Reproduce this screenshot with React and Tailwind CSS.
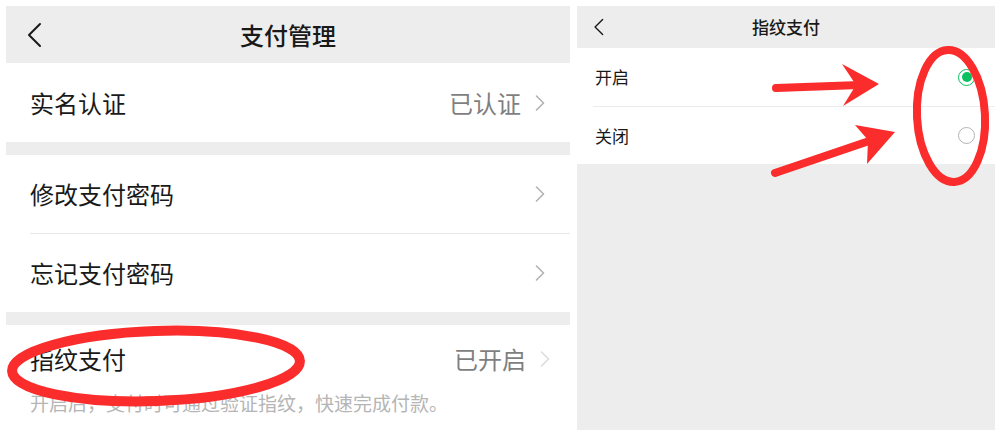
import React from 'react';

const BackArrow = ({ className }) => (
  <svg viewBox="0 0 16 26" className={className} fill="none" stroke="#1a1a1a" strokeWidth="2" strokeLinecap="round" strokeLinejoin="round">
    <path d="M14 2 L3 13 L14 24" />
  </svg>
);

const Chevron = ({ color = '#b2b2b2' }) => (
  <svg viewBox="0 0 10 16" className="w-[10px] h-[16px]" fill="none" stroke={color} strokeWidth="1.6" strokeLinecap="round" strokeLinejoin="round">
    <path d="M1.5 1 L8.5 8 L1.5 15" />
  </svg>
);

function Row({ label, value, chevronColor, className = 'pr-[25px]' }) {
  return (
    <div className={`flex items-center justify-between pl-[24px] ${className}`}>
      <span className="text-[24px] text-[#191919]">{label}</span>
      <div className="flex items-center gap-[14px]">
        {value && <span className="text-[24px] text-[#7f7f7f]">{value}</span>}
        <Chevron color={chevronColor} />
      </div>
    </div>
  );
}

function PayManage() {
  return (
    <div className="w-[564px] flex flex-col bg-white">
      <div className="h-[57px] shrink-0 bg-[#ededed] grid grid-cols-[80px_1fr_80px] items-center">
        <BackArrow className="w-[16px] h-[26px] ml-[20px]" />
        <h1 className="text-center text-[24px] font-medium text-[#191919]">支付管理</h1>
        <div />
      </div>
      <Row label="实名认证" value="已认证" className="h-[79px] pr-[25px]" />
      <div className="h-[13px] bg-[#ededed]" />
      <Row label="修改支付密码" className="h-[78px] pr-[25px]" />
      <div className="ml-[24px] h-px bg-[#e8e8e8]" />
      <Row label="忘记支付密码" className="h-[78px] pr-[25px]" />
      <div className="h-[13px] bg-[#ededed]" />
      <Row label="指纹支付" value="已开启" chevronColor="#dcdcdc" className="h-[68px] pr-[20px]" />
      <p className="pl-[24px] text-[19px] leading-[19px] text-[#b5b5b5]">开启后，支付时可通过验证指纹，快速完成付款。</p>
    </div>
  );
}

function Radio({ checked }) {
  return checked ? (
    <div className="w-[17px] h-[17px] rounded-full border-[1.5px] border-[#07c160] flex items-center justify-center">
      <div className="w-[10px] h-[10px] rounded-full bg-[#07c160]" />
    </div>
  ) : (
    <div className="w-[17px] h-[17px] rounded-full border-[1.5px] border-[#b3b3b3]" />
  );
}

function FingerprintPay() {
  const options = [
    { label: '开启', checked: true },
    { label: '关闭', checked: false },
  ];
  return (
    <div className="w-[418px] flex flex-col bg-[#ededed]">
      <div className="h-[42px] shrink-0 grid grid-cols-[60px_1fr_60px] items-center">
        <BackArrow className="w-[11px] h-[18px] ml-[16px]" />
        <h1 className="text-center text-[17px] font-medium text-[#191919]">指纹支付</h1>
        <div />
      </div>
      <div className="bg-white">
        {options.map((o, i) => (
          <React.Fragment key={o.label}>
            {i > 0 && <div className="ml-[16px] h-px bg-[#ececec]" />}
            <div className={`flex items-center justify-between pl-[18px] pr-[20px] ${i === 0 ? 'h-[58px]' : 'h-[57px]'}`}>
              <span className="text-[17px] text-[#191919]">{o.label}</span>
              <Radio checked={o.checked} />
            </div>
          </React.Fragment>
        ))}
      </div>
    </div>
  );
}

export default function App() {
  return (
    <div className="relative w-[1000px] h-[430px] overflow-hidden bg-white font-['Noto_Sans_CJK_SC',sans-serif]">
      <div className="flex h-full gap-[7px] pt-[6px] pl-[6px]">
        <PayManage />
        <FingerprintPay />
      </div>

      {/* hand-drawn red markup on top of the screens */}
      <svg className="absolute inset-0 pointer-events-none" width="1000" height="430" viewBox="0 0 1000 430">
        <g fill="none" stroke="#fb2c2c" strokeLinecap="round">
          <ellipse cx="156" cy="366" rx="144" ry="35" strokeWidth="10" transform="rotate(-2 156 366)" />
          <ellipse cx="951" cy="116" rx="34" ry="66" strokeWidth="8" transform="rotate(-3 951 116)" />
          <line x1="776" y1="88" x2="860" y2="85" strokeWidth="8" />
          <line x1="775" y1="173" x2="878" y2="138" strokeWidth="8" />
        </g>
        <g fill="#fb2c2c">
          <polygon points="842,64 879,84 843,106 856,85" />
          <polygon points="855,125 895,132 867,164 868,140" />
        </g>
      </svg>
    </div>
  );
}
